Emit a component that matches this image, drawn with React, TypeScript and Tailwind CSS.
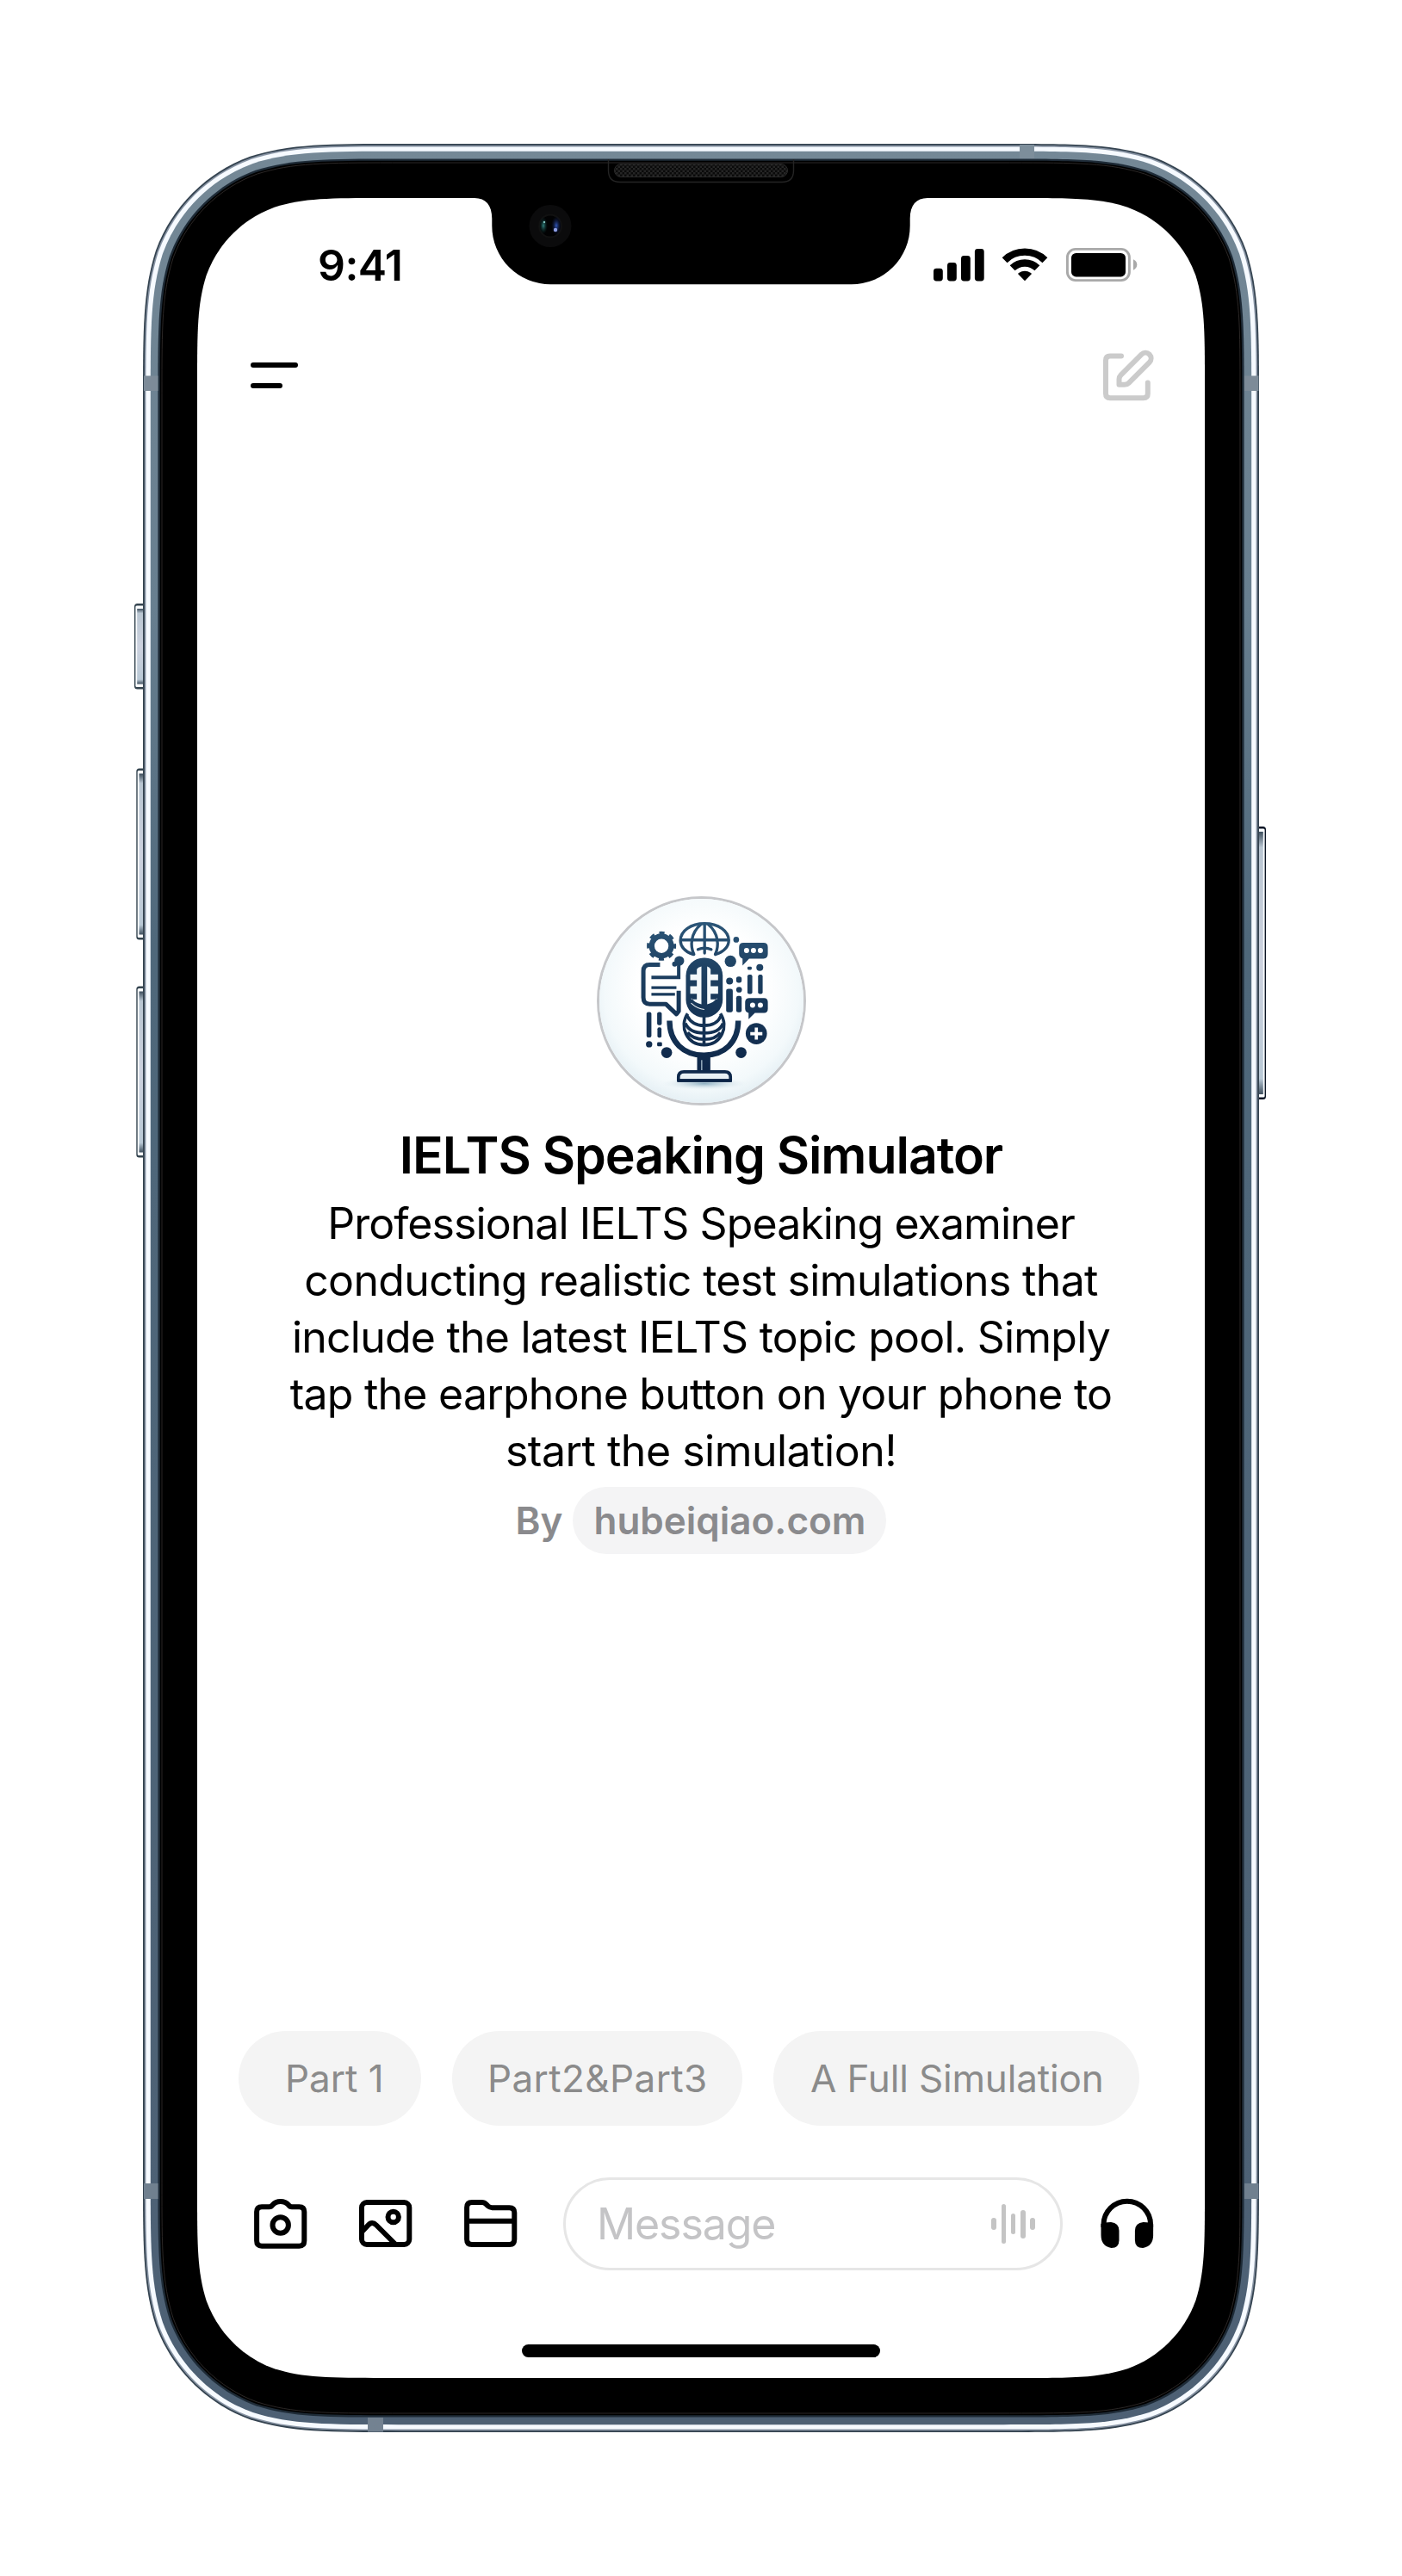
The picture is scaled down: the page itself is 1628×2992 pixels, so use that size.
/** Rounded rectangle with continuous (smoothed) corners. */
function smoothRect(x: number, y: number, w: number, h: number, r: number) {
  const a = 1.528665 * r;
  const k = [1.08849323, 0.86840689, 0.63149399, 0.07491176, 0.37282392, 0.16905899].map((n) => n * r);
  const [k1, k2, k3, k4, k5, k6] = k;
  const X = x + w;
  const Y = y + h;
  return [
    `M${x + a} ${y}H${X - a}`,
    `C${X - k1} ${y} ${X - k2} ${y} ${X - k3} ${y + k4}`,
    `C${X - k5} ${y + k6} ${X - k6} ${y + k5} ${X - k4} ${y + k3}`,
    `C${X} ${y + k2} ${X} ${y + k1} ${X} ${y + a}V${Y - a}`,
    `C${X} ${Y - k1} ${X} ${Y - k2} ${X - k4} ${Y - k3}`,
    `C${X - k6} ${Y - k5} ${X - k5} ${Y - k6} ${X - k3} ${Y - k4}`,
    `C${X - k2} ${Y} ${X - k1} ${Y} ${X - a} ${Y}H${x + a}`,
    `C${x + k1} ${Y} ${x + k2} ${Y} ${x + k3} ${Y - k4}`,
    `C${x + k5} ${Y - k6} ${x + k6} ${Y - k5} ${x + k4} ${Y - k3}`,
    `C${x} ${Y - k2} ${x} ${Y - k1} ${x} ${Y - a}V${y + a}`,
    `C${x} ${y + k1} ${x} ${y + k2} ${x + k4} ${y + k3}`,
    `C${x + k6} ${y + k5} ${x + k5} ${y + k6} ${x + k3} ${y + k4}`,
    `C${x + k2} ${y} ${x + k1} ${y} ${x + a} ${y}Z`,
  ].join("");
}

const ring = (i: number) => smoothRect(166 + i, 167 + i, 1296 - 2 * i, 2658 - 2 * i, 197 - i);

function SideButton({ x, y, w, h, flip }: { x: number; y: number; w: number; h: number; flip?: boolean }) {
  return (
    <g transform={flip ? `translate(${2 * x + w} 0) scale(-1 1)` : undefined}>
      <rect x={x} y={y} width={w + 6} height={h} rx="3.5" fill={flip ? "#0b1524" : "#34444f"} />
      <rect x={x + 1.4} y={y + 2.4} width={w + 4} height={h - 4.8} rx="1.5" fill="#fbfdff" />
      <rect x={x + 3.2} y={y + 6} width={w + 2} height={h - 12} fill="url(#buttonFill)" />
    </g>
  );
}

function DeviceFrame() {
  return (
    <svg className="absolute left-0 top-0" width="1628" height="2992" viewBox="0 0 1628 2992" aria-hidden="true">
      <defs>
        <linearGradient id="metal" x1="0" y1="0" x2="0" y2="1">
          <stop offset="0" stopColor="#748896" />
          <stop offset="0.2" stopColor="#687f90" />
          <stop offset="0.35" stopColor="#4f687b" />
          <stop offset="1" stopColor="#4d6074" />
        </linearGradient>
        <linearGradient id="buttonFill" x1="0" y1="0" x2="0" y2="1">
          <stop offset="0" stopColor="#3d4e5d" />
          <stop offset="0.06" stopColor="#b9c6d2" />
          <stop offset="0.5" stopColor="#ccd2df" />
          <stop offset="0.94" stopColor="#b9c9d6" />
          <stop offset="1" stopColor="#3d4e5d" />
        </linearGradient>
        <pattern id="mesh" width="5" height="5" patternUnits="userSpaceOnUse">
          <rect width="5" height="5" fill="#0a0a0a" />
          <rect width="2.5" height="2.5" fill="#252525" />
          <rect x="2.5" y="2.5" width="2.5" height="2.5" fill="#252525" />
        </pattern>
        <radialGradient id="lensBlue">
          <stop offset="0" stopColor="#2f55b8" />
          <stop offset="1" stopColor="#0a1030" stopOpacity="0" />
        </radialGradient>
        <radialGradient id="lensTeal">
          <stop offset="0" stopColor="#2f7f7c" />
          <stop offset="1" stopColor="#06201f" stopOpacity="0" />
        </radialGradient>
      </defs>

      <SideButton x={156} y={701} w={11} h={99.5} />
      <SideButton x={158.3} y={892.5} w={9} h={199} />
      <SideButton x={158.3} y={1145.5} w={9} h={199} />
      <SideButton x={1461} y={960} w={9} h={317} flip />

      <path d={ring(0)} fill="#344350" />
      <path d={ring(1.8)} fill="#8793a3" />
      <path d={ring(3.4)} fill="#f6faff" />
      <path d={ring(8.8)} fill="url(#metal)" />
      <path d={ring(17.4)} fill="#1e2b37" />
      <path d={ring(19.8)} fill="#000" />
      <path d={ring(22)} fill="none" stroke="#2b2726" strokeWidth="1" />

      <rect x="167" y="436.5" width="16.5" height="17.5" fill="#7d8b98" />
      <rect x="1445" y="436.5" width="16.5" height="17.5" fill="#7d8b98" />
      <rect x="167" y="2536" width="16.5" height="18" fill="#70808f" />
      <rect x="1445" y="2536" width="16.5" height="18" fill="#70808f" />
      <rect x="1184" y="168" width="17" height="16" fill="#7d8e9b" />
      <rect x="427" y="2808" width="18" height="16.5" fill="#738291" />

      <path d={smoothRect(229, 230, 1170, 2532, 142)} fill="#fff" />
      <path
        d="M551 228V230C564 230 571.3 238 571.3 254V262A68 68 0 0 0 640 330.3H988A68 68 0 0 0 1056.7 262V254C1056.7 238 1064 230 1077 230V228Z"
        fill="#000"
      />
      <path d="M706.5 185V198Q706.5 211.5 720 211.5H908Q921.5 211.5 921.5 198V185" fill="none" stroke="#242424" strokeWidth="1.4" />
      <rect x="713.5" y="190.5" width="201" height="15" rx="7.5" fill="url(#mesh)" stroke="#2a2a2a" />
      <circle cx="639" cy="262.5" r="24.5" fill="#0b0b0c" />
      <circle cx="639" cy="262.5" r="14" fill="#111" />
      <circle cx="639" cy="262.5" r="12" fill="#020203" />
      <ellipse cx="646" cy="262" rx="6" ry="11" fill="url(#lensBlue)" />
      <ellipse cx="631" cy="262" rx="5" ry="10" fill="url(#lensTeal)" />
      <circle cx="645" cy="267" r="2.2" fill="#8fa0e6" />
      <circle cx="632" cy="258" r="1.2" fill="#7fc4c0" />
    </svg>
  );
}

function StatusIcons() {
  return (
    <svg width="238" height="42" viewBox="1083 287 238 42" aria-hidden="true">
      <rect x="1084" y="311.7" width="10.8" height="14.8" rx="3.4" />
      <rect x="1100" y="305" width="10.8" height="21.5" rx="3.4" />
      <rect x="1116" y="297" width="10.8" height="29.5" rx="3.4" />
      <rect x="1131.9" y="289" width="10.8" height="37.5" rx="3.4" />
      <g fill="none" stroke="#000" strokeWidth="8.4">
        <path d="M1166.6 302.2A33.5 33.5 0 0 1 1213.4 302.2" />
        <path d="M1175.6 311.3A20.6 20.6 0 0 1 1204.4 311.3" />
      </g>
      <path d="M1190 326.3L1182.2 318.3Q1182.2 317.6 1183 317Q1190 312.4 1197 317Q1197.800 317.6 1197.800 318.3Z" />
      <rect x="1239.400" y="289.4" width="72" height="36.2" rx="9.500" fill="none" stroke="#a9a9a9" strokeWidth="2.900" />
      <rect x="1244" y="294" width="63" height="27.400" rx="5.500" />
      <path d="M1316 301.300V313.700Q1320.300 311.600 1320.300 307.500Q1320.300 303.400 1316 301.300Z" fill="#a9a9a9" />
    </svg>
  );
}

function EditIcon() {
  return (
    <svg width="62" height="62" viewBox="1279 406 62 62" fill="none" stroke="#cbcbcb" strokeWidth="6" strokeLinecap="round" strokeLinejoin="round" aria-hidden="true">
      <path d="M1302 414.500H1289Q1284 414.500 1284 419.500V458.300Q1284 463.300 1289 463.300H1327.800Q1332.800 463.300 1332.800 458.300V445.500" />
      <path d="M1325.500 412.600L1301.500 436.600Q1299.500 438.600 1299.500 441.500V447.800H1305.800Q1308.700 447.800 1310.700 445.800L1334.700 421.800A6.500 6.500 0 0 0 1325.500 412.600Z" />
    </svg>
  );
}

const NAVY = "url(#navy)";

/** Avatar artwork: a studio microphone surrounded by conversation symbols. */
function MicArtwork() {
  return (
    <svg className="block size-full" viewBox="47 41 710 710" aria-hidden="true">
      <defs>
        <radialGradient id="halo" cx="0.5" cy="0.45" r="0.55">
          <stop offset="0.55" stopColor="#ffffff" />
          <stop offset="0.85" stopColor="#f3f9fb" />
          <stop offset="1" stopColor="#e4eff4" />
        </radialGradient>
        <linearGradient id="navy" gradientUnits="userSpaceOnUse" x1="0" y1="120" x2="0" y2="680">
          <stop offset="0" stopColor="#2c5678" />
          <stop offset="0.35" stopColor="#1c3e5f" />
          <stop offset="1" stopColor="#0c2446" />
        </linearGradient>
        <radialGradient id="floor">
          <stop offset="0" stopColor="#8fb0c2" />
          <stop offset="1" stopColor="#e4eff4" stopOpacity="0" />
        </radialGradient>
      </defs>
      <circle cx="402" cy="396" r="362" fill="url(#halo)" />
      <ellipse cx="412" cy="684" rx="150" ry="22" fill="url(#floor)" />

      {/* gear */}
      <circle cx="263" cy="205" r="34" fill="none" stroke={NAVY} strokeWidth="19" />
      <circle cx="263" cy="205" r="45" fill="none" stroke={NAVY} strokeWidth="12" strokeDasharray="18 17.343" strokeDashoffset="9" />

      {/* globe */}
      <g fill="none" stroke={NAVY} strokeWidth="10" strokeLinecap="round">
        <path d="M372 234C345 226 329 206 329 186C329 152 365 127 413 127C461 127 497 152 497 186C497 206 480 226 452 234" />
        <path d="M413 127V230M331 184H496" />
        <path d="M376 234C362 205 364 160 400 130M450 234C464 205 462 160 426 130" />
        <path d="M390 217Q413 207 436 217" />
      </g>
      <g fill={NAVY}>
        <circle cx="523" cy="183" r="10" />
        <circle cx="503" cy="258" r="20" />
        <circle cx="325" cy="257" r="17" />
        <circle cx="309" cy="268" r="9" />
        <circle cx="281" cy="576" r="19" />
        <circle cx="540" cy="576" r="19" />
        <circle cx="220" cy="547" r="11" />
        <rect x="248" y="540" width="17" height="14" rx="4" />
        <circle cx="500" cy="327" r="12" />
        <rect x="523" y="311" width="19" height="22" rx="8" />
        <circle cx="533" cy="357" r="10" />
        <circle cx="605" cy="280" r="12" />
        <rect x="562" y="277" width="15" height="11" rx="4" />
        <rect x="488" y="354" width="23" height="82" rx="7" />
        <rect x="523" y="379" width="19" height="57" rx="7" />
        <rect x="562" y="305" width="17" height="67" rx="6" />
        <rect x="599" y="305" width="16" height="67" rx="6" />
        <rect x="211" y="435" width="17" height="88" rx="6" />
        <rect x="248" y="435" width="16" height="46" rx="6" />
        <rect x="249" y="488" width="14" height="36" rx="6" />
      </g>

      {/* large speech bubble */}
      <g fill="none" stroke={NAVY} strokeLinecap="butt">
        <path d="M258 270H222Q200 270 200 292V384Q200 407 222 407H278L315 442L323 432V361" strokeWidth="15" strokeLinejoin="round" />
        <path d="M228 314H323V262" strokeWidth="12" />
        <path d="M228 350H315M228 373H310" strokeWidth="10" />
      </g>

      {/* small speech bubbles */}
      <g fill={NAVY}>
        <path d="M548 194H618Q633 194 633 209V233Q633 249 618 249H568L545 273V249Q533 245 533 232V209Q533 194 548 194Z" />
        <path d="M569 386H620Q633 386 633 400V424Q633 438 620 438H588L566 460V438Q554 435 554 423V400Q554 386 569 386Z" />
        <circle cx="593" cy="510" r="37" />
      </g>
      <g fill="#fff">
        <circle cx="559" cy="221" r="9" />
        <circle cx="583" cy="221" r="9" />
        <circle cx="607" cy="221" r="9" />
        <circle cx="580" cy="411" r="9" />
        <circle cx="607" cy="411" r="9" />
      </g>
      <path d="M593 489V531M572 510H614" stroke="#fff" strokeWidth="11" />

      {/* lower globe */}
      <g fill="none" stroke={NAVY} strokeWidth="11">
        <path d="M354 440C324 485 350 549 411 549C472 549 498 485 468 440" />
        <path d="M411 440V549M346 474Q360 508 411 508Q464 508 477 474M354 506Q372 530 411 530Q452 530 468 506M352 448Q370 482 411 482Q456 482 470 448" />
      </g>

      {/* microphone capsule */}
      <rect x="348" y="246" width="128" height="208" rx="62" fill={NAVY} />
      <path
        d="M402 276V408C385 404 374 396 367 386V391H386V371H363V345H386V324H363V304H386V286Q390 279 402 276Z M422 276V408C438 404 449 396 456 386V391H434V371H460V345H434V324H460V304H434V286Q431 279 422 276Z"
        fill="#f4f9fb"
      />
      <path d="M366 404Q388 424 412 426" fill="none" stroke="#f4f9fb" strokeWidth="3" />

      {/* stand */}
      <path d="M291 465C291 540 340 585 411 585C482 585 530 540 530 465" fill="none" stroke={NAVY} strokeWidth="19" />
      <rect x="387" y="580" width="46" height="62" fill={NAVY} />
      <path d="M403 602V640" stroke="#a7bccb" strokeWidth="4" />
      <path d="M322 673V662Q322 643 341 643H484Q503 643 503 662V673Z" fill="#e9f1f5" stroke="#0f294b" strokeWidth="11" strokeLinejoin="round" />
      <path d="M318 673H508" stroke="#0c2446" strokeWidth="10" />
    </svg>
  );
}

const toolIcon = { fill: "none", stroke: "#000", strokeWidth: 6, strokeLinejoin: "round" as const };

function CameraIcon() {
  return (
    <svg width="62" height="60" viewBox="295 2553 62 60" {...toolIcon} aria-hidden="true">
      <path d="M304 2563.200H312.500Q315 2563.200 316.500 2561Q320 2557 325.700 2557Q331.500 2557 335 2561Q336.500 2563.200 339 2563.200H347.500Q353.300 2563.200 353.300 2569V2602.500Q353.300 2608.700 347.500 2608.700H304Q298.100 2608.700 298.100 2602.500V2569Q298.100 2563.200 304 2563.200Z" />
      <circle cx="325.700" cy="2584.500" r="9.200" />
    </svg>
  );
}

function PhotoIcon() {
  return (
    <svg width="62" height="60" viewBox="417 2553 62 60" {...toolIcon} aria-hidden="true">
      <rect x="420" y="2558" width="55.300" height="49" rx="6" />
      <circle cx="456.700" cy="2575" r="6.200" />
      <path d="M420.500 2592L427.500 2584.500Q432 2579.500 437 2584.500L459.500 2607" />
    </svg>
  );
}

function FolderIcon() {
  return (
    <svg width="62" height="60" viewBox="539 2553 62 60" {...toolIcon} aria-hidden="true">
      <path d="M548 2558H559.500Q562.500 2558 564.500 2560.200L566.500 2562.200Q568.600 2564.200 571.500 2564.200H591.500Q597.300 2564.200 597.300 2570V2601Q597.300 2607 591.500 2607H548Q542.100 2607 542.100 2601V2564Q542.100 2558 548 2558Z" />
      <path d="M542 2579.700H597" />
    </svg>
  );
}

function WaveIcon() {
  const bars = [14, 46, 23.5, 33, 14];
  return (
    <div className="flex items-center gap-[5.7px]">
      {bars.map((h, i) => (
        <span key={i} className="w-[5.6px] rounded-full bg-[#c4c4c4]" style={{ height: h }} />
      ))}
    </div>
  );
}

function HeadphonesIcon() {
  return (
    <svg width="62" height="60" viewBox="1278.500 2553 62 60" aria-hidden="true">
      <path d="M1282 2587V2584A27.300 27.300 0 0 1 1336.600 2584V2587" fill="none" stroke="#000" strokeWidth="6" />
      <path d="M1279 2583Q1283 2581 1290.500 2581Q1300 2582 1300 2591V2602Q1300 2611 1291 2611Q1279 2609 1279 2596Z" />
      <path d="M1339.600 2583Q1335.600 2581 1328.100 2581Q1318.400 2582 1318.400 2591V2602Q1318.400 2611 1327.600 2611Q1339.600 2609 1339.600 2596Z" />
    </svg>
  );
}

const description = [
  { text: "Professional IELTS Speaking examiner", tracking: "tracking-[-0.93px]" },
  { text: "conducting realistic test simulations that", tracking: "tracking-[-0.67px]" },
  { text: "include the latest IELTS topic pool. Simply", tracking: "tracking-[-0.78px]" },
  { text: "tap the earphone button on your phone to", tracking: "tracking-[-0.77px]" },
  { text: "start the simulation!", tracking: "tracking-[-0.5px]" },
];

const prompts = [
  { text: "Part 1", box: "w-[212px] pl-[54px]" },
  { text: "Part2&Part3", box: "w-[337px] pl-[41px] tracking-[0.4px]" },
  { text: "A Full Simulation", box: "w-[425px] pl-[43px] tracking-[-0.15px]" },
];

export default function App() {
  return (
    <main className="relative h-[2992px] w-[1628px] overflow-hidden bg-white pl-[229px] pt-[230px] font-['Inter',sans-serif] text-black">
      <DeviceFrame />
      <div className="relative flex h-[2532px] w-[1170px] flex-col">
        <header className="flex h-[156px] items-center justify-between pl-[140px] pr-[78px]">
          <span className="text-[50px] font-semibold leading-none tracking-[-0.6px]">9:41</span>
          <StatusIcons />
        </header>
        <nav className="flex h-[100px] items-center justify-between pl-[62px] pr-[58px]">
          <button className="flex flex-col gap-[18px]" aria-label="Menu">
            <span className="h-[6px] w-[55px] rounded-full bg-black" />
            <span className="h-[6px] w-[37px] rounded-full bg-black" />
          </button>
          <button aria-label="New chat">
            <EditIcon />
          </button>
        </nav>

        <section className="flex flex-1 flex-col items-center pt-[555px]">
          <div className="size-[243px] overflow-hidden rounded-full border-[3px] border-[#c6c7ca]">
            <MicArtwork />
          </div>
          <h1 className="mt-[22px] whitespace-nowrap text-[59px] font-semibold leading-[72px] tracking-[-1.05px]">
            IELTS Speaking Simulator
          </h1>
          <p className="mt-[10px] flex flex-col items-center text-[50px] leading-[66px]">
            {description.map((line) => (
              <span key={line.text} className={`whitespace-nowrap ${line.tracking}`}>
                {line.text}
              </span>
            ))}
          </p>
          <div className="mt-[9px] flex items-center gap-[12px] text-[44px] font-semibold leading-none text-[#8a8a8d]">
            <span>By</span>
            <span className="flex h-[78px] items-center rounded-full bg-[#f4f4f5] px-[24px]">hubeiqiao.com</span>
          </div>
        </section>

        <div className="flex gap-[36px] pl-[48px] text-[44px] text-[#8b8b8b]">
          {prompts.map((prompt) => (
            <button
              key={prompt.text}
              className={`flex h-[110px] items-center whitespace-nowrap rounded-full bg-[#f4f4f4] ${prompt.box}`}
            >
              {prompt.text}
            </button>
          ))}
        </div>

        <div className="mt-[60px] flex h-[108px] items-center pl-[66px]">
          <div className="flex gap-[60px]">
            <CameraIcon />
            <PhotoIcon />
            <FolderIcon />
          </div>
          <div className="ml-[53px] flex h-[108px] w-[580px] items-center justify-between rounded-full border-[3px] border-[#e6e6e6] pl-[36px] pr-[29px]">
            <span className="text-[50px] leading-none tracking-[-1.1px] text-[#c4c4c6]">Message</span>
            <WaveIcon />
          </div>
          <button className="ml-[44px]" aria-label="Voice mode">
            <HeadphonesIcon />
          </button>
        </div>

        <div className="mb-[24px] ml-[377px] mt-[86px] h-[15px] w-[416px] rounded-full bg-black" />
      </div>
    </main>
  );
}
